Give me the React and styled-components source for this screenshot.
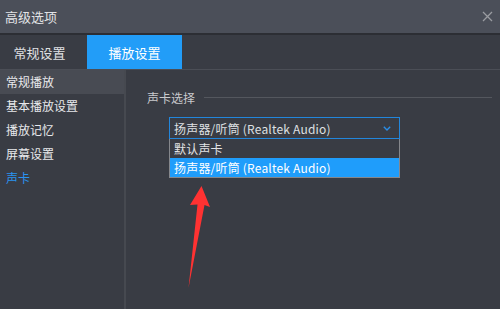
import React from "react";
import styled, { createGlobalStyle } from "styled-components";

const Global = createGlobalStyle`
  html, body {
    margin: 0;
    padding: 0;
    background: #393c44;
  }
  body {
    font-family: "Noto Sans CJK SC", "Noto Sans", sans-serif;
  }
`;

const Window = styled.div`
  width: 500px;
  height: 309px;
  display: flex;
  flex-direction: column;
  background: #393c44;
  position: relative;
  overflow: hidden;
`;

const TitleBar = styled.div`
  height: 33px;
  flex: none;
  display: flex;
  align-items: center;
  justify-content: space-between;
  padding: 0 6px 0 5px;
  background: #4b4f59;
  border-bottom: 2px solid #2c2e34;
  color: #e2e3e6;
  font-size: 13px;
`;

const Close = styled.svg`
  width: 11px;
  height: 11px;
  margin-right: 1px;
`;

const TabBar = styled.div`
  height: 34px;
  flex: none;
  display: flex;
  gap: 8px;
  background: #393c44;
  border-bottom: 1px solid #4b4e56;
`;

const Tab = styled.div`
  width: ${(p) => p.$w}px;
  display: flex;
  align-items: center;
  justify-content: center;
  font-size: 13px;
  color: ${(p) => (p.$active ? "#ffffff" : "#e0e1e4")};
  background: ${(p) => (p.$active ? "#229df8" : "transparent")};
`;

const Body = styled.div`
  flex: 1;
  display: flex;
  min-height: 0;
`;

const Sidebar = styled.div`
  width: 124px;
  flex: none;
  border-right: 2px solid #464950;
  display: flex;
  flex-direction: column;
`;

const NavItem = styled.div`
  height: 24px;
  line-height: 24px;
  padding-left: 6px;
  font-size: 12px;
  color: ${(p) => (p.$current ? "#2a93f0" : "#e8e9ec")};
  background: ${(p) => (p.$selected ? "#484b53" : "transparent")};
`;

const Content = styled.div`
  flex: 1;
  padding: 18px 8px 0 21px;
  display: flex;
  flex-direction: column;
`;

const Section = styled.div`
  display: flex;
  align-items: center;
  font-size: 12px;
  color: #c9cacd;
  height: 18px;
`;

const Rule = styled.div`
  flex: 1;
  height: 1px;
  margin-left: 9px;
  background: #54575e;
`;

const SelectWrap = styled.div`
  position: relative;
  margin: 11px 0 0 22px;
  width: 231px;
`;

const SelectBox = styled.div`
  height: 20px;
  border: 1px solid #2286dc;
  display: flex;
  align-items: center;
  justify-content: space-between;
  padding: 0 8px 0 4px;
  font-size: 12px;
  letter-spacing: 0.2px;
  color: #dfe0e3;
`;

const Chevron = styled.svg`
  width: 8px;
  height: 5px;
`;

const Menu = styled.div`
  position: absolute;
  left: 0;
  right: 0;
  top: 22px;
  border: 1px solid #85878c;
  border-top: none;
  background: #393c44;
`;

const Option = styled.div`
  height: 19px;
  line-height: 19px;
  padding-left: 4px;
  font-size: 12px;
  letter-spacing: 0.2px;
  color: ${(p) => (p.$hl ? "#ffffff" : "#e2e3e6")};
  background: ${(p) => (p.$hl ? "#1f9dfb" : "transparent")};
`;

const Arrow = styled.svg`
  position: absolute;
  left: 0;
  top: 0;
  pointer-events: none;
`;

const navItems = ["常规播放", "基本播放设置", "播放记忆", "屏幕设置", "声卡"];

export default function App() {
  return (
    <Window>
      <Global />
      <TitleBar>
        <span>高级选项</span>
        <Close viewBox="0 0 11 11">
          <path d="M1 1 L10 10 M10 1 L1 10" stroke="#9a9ca1" strokeWidth="1.3" />
        </Close>
      </TitleBar>
      <TabBar>
        <Tab $w={79}>常规设置</Tab>
        <Tab $w={95} $active>
          播放设置
        </Tab>
      </TabBar>
      <Body>
        <Sidebar>
          {navItems.map((t, i) => (
            <NavItem key={t} $selected={i === 0} $current={i === 4}>
              {t}
            </NavItem>
          ))}
        </Sidebar>
        <Content>
          <Section>
            声卡选择
            <Rule />
          </Section>
          <SelectWrap>
            <SelectBox>
              <span>扬声器/听筒 (Realtek Audio)</span>
              <Chevron viewBox="0 0 8 5">
                <path d="M0.8 0.8 L4 4 L7.2 0.8" stroke="#2a8de6" strokeWidth="1.4" fill="none" />
              </Chevron>
            </SelectBox>
            <Menu>
              <Option>默认声卡</Option>
              <Option $hl>扬声器/听筒 (Realtek Audio)</Option>
            </Menu>
          </SelectWrap>
        </Content>
      </Body>
      <Arrow width="500" height="309" viewBox="0 0 500 309">
        <path
          d="M201.5 186 L210 207 L204.5 205 L188.5 288 L197.5 204.5 L190 205 Z"
          fill="#ff3232"
        />
      </Arrow>
    </Window>
  );
}
